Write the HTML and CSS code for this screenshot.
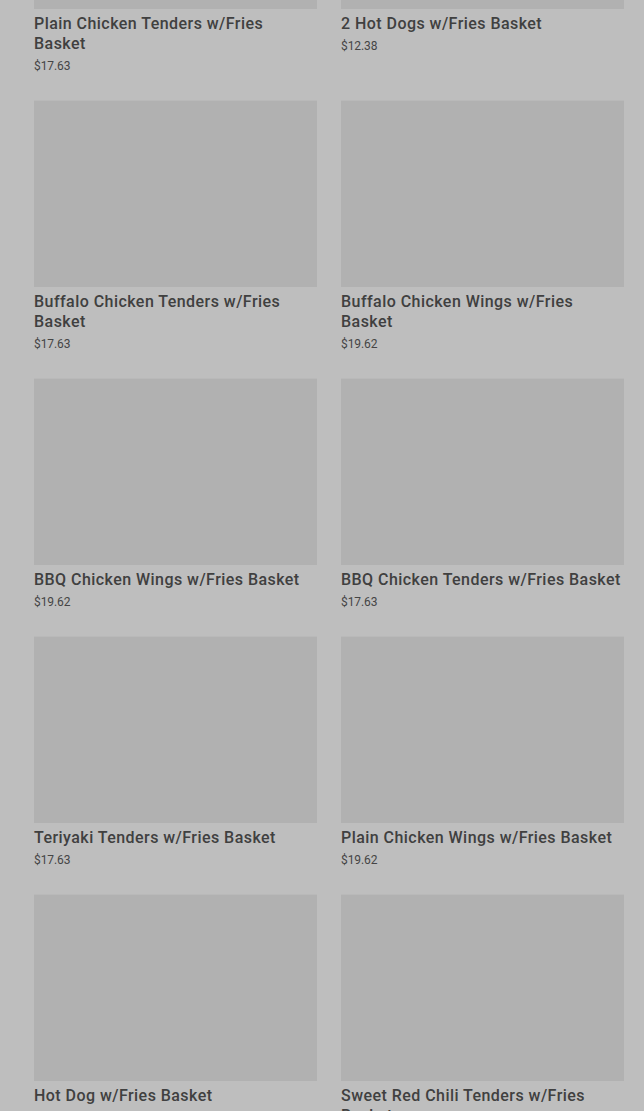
FILE: index.html
```html
<!DOCTYPE html>
<html lang="en">
<head>
    <meta charset="UTF-8">
    <meta name="viewport" content="width=device-width, initial-scale=1.0">
    <title>Baskets</title>
    <link rel="stylesheet" href="styles.css">
</head>
<body>
    <div class="menu-grid">
        <div class="item">
            <div class="item-photo"></div>
            <div class="item-name">Plain Chicken Tenders w/Fries Basket</div>
            <div class="item-price">$17.63</div>
        </div>
        <div class="item">
            <div class="item-photo"></div>
            <div class="item-name">2 Hot Dogs w/Fries Basket</div>
            <div class="item-price">$12.38</div>
        </div>
        <div class="item">
            <div class="item-photo"></div>
            <div class="item-name">Buffalo Chicken Tenders w/Fries Basket</div>
            <div class="item-price">$17.63</div>
        </div>
        <div class="item">
            <div class="item-photo"></div>
            <div class="item-name">Buffalo Chicken Wings w/Fries Basket</div>
            <div class="item-price">$19.62</div>
        </div>
        <div class="item">
            <div class="item-photo"></div>
            <div class="item-name">BBQ Chicken Wings w/Fries Basket</div>
            <div class="item-price">$19.62</div>
        </div>
        <div class="item">
            <div class="item-photo"></div>
            <div class="item-name">BBQ Chicken Tenders w/Fries Basket</div>
            <div class="item-price">$17.63</div>
        </div>
        <div class="item">
            <div class="item-photo"></div>
            <div class="item-name">Teriyaki Tenders w/Fries Basket</div>
            <div class="item-price">$17.63</div>
        </div>
        <div class="item">
            <div class="item-photo"></div>
            <div class="item-name">Plain Chicken Wings w/Fries Basket</div>
            <div class="item-price">$19.62</div>
        </div>
        <div class="item">
            <div class="item-photo"></div>
            <div class="item-name">Hot Dog w/Fries Basket</div>
            <div class="item-price">$17.63</div>
        </div>
        <div class="item">
            <div class="item-photo"></div>
            <div class="item-name">Sweet Red Chili Tenders w/Fries Basket</div>
            <div class="item-price">$17.63</div>
        </div>
    </div>
</body>
</html>
```

FILE: styles.css
```css
body {
    margin: 0;
    padding: 0;
    background-color: #bebebe;
    font-family: Roboto, "Liberation Sans", sans-serif;
    overflow: hidden;
}

/* la lista ya esta desplazada: la primera fila queda cortada arriba */
.menu-grid {
    display: grid;
    grid-template-columns: 283px 283px;
    column-gap: 24px;
    padding: 0 20px 0 34px;
    margin-top: -178px;
}

.item {
    padding-bottom: 26px;
}

.item-photo {
    height: 187px;
    background-color: #b1b1b1;
    border-top: 1px solid #b9b9b9;
    box-sizing: border-box;
}

.item-name {
    margin-top: 5px;
    font-size: 16px;
    line-height: 20px;
    font-weight: 500;
    letter-spacing: 0.45px;
    color: #404040;
}

.item-price {
    margin-top: 4px;
    font-size: 12px;
    line-height: 16px;
    color: #454545;
    letter-spacing: -0.1px;
}
```
